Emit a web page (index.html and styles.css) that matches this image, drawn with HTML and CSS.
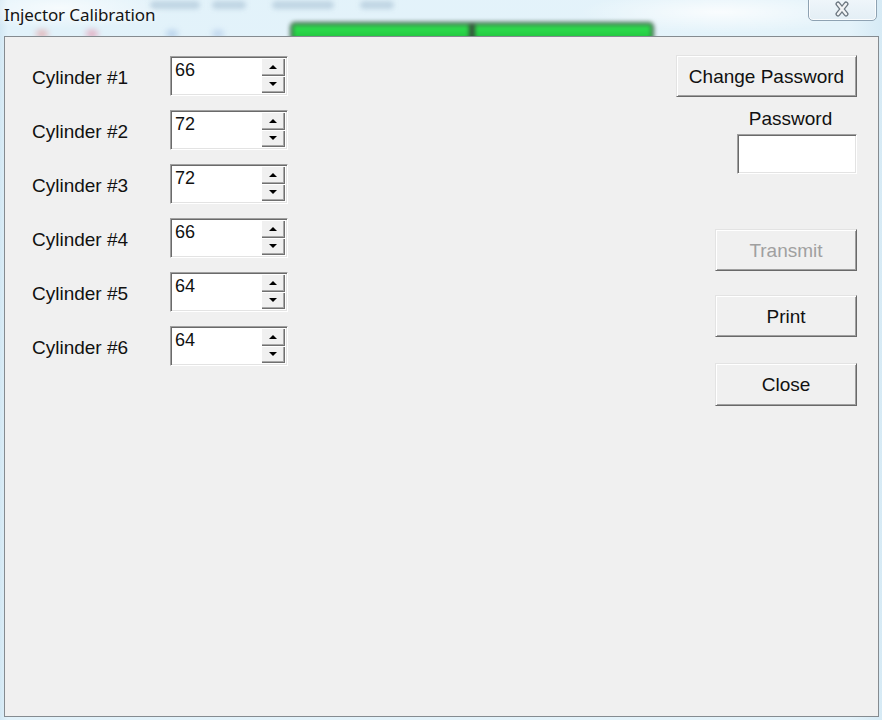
FILE: index.html
```html
<!DOCTYPE html>
<html>
<head>
<meta charset="utf-8">
<title>Injector Calibration</title>
<link rel="stylesheet" href="styles.css">
</head>
<body>
<div class="window">
  <div class="titlebar">
    <div class="backdrop">
      <span class="smudge s1"></span>
      <span class="smudge s2"></span>
      <span class="smudge s3"></span>
      <span class="smudge s4"></span>
      <span class="blob b1"></span>
      <span class="blob b2"></span>
      <span class="blob b3"></span>
      <span class="blob b4"></span>
      <div class="green-bar"><span class="green-seg"></span><span class="green-div"></span><span class="green-seg"></span></div>
    </div>
    <div class="title">Injector Calibration</div>
    <div class="close-btn">
      <svg width="16" height="16" viewBox="0 0 16 16">
        <path d="M4 3 L12 13 M12 3 L4 13" stroke="#6c7781" stroke-width="5" stroke-linecap="round" fill="none"/>
        <path d="M4 3 L12 13 M12 3 L4 13" stroke="#f2f4f6" stroke-width="2.4" stroke-linecap="round" fill="none"/>
      </svg>
    </div>
  </div>
  <div class="client">
    <div class="fields">
      <div class="row"><span class="label">Cylinder #1</span><div class="spin"><span class="value">66</span><div class="spin-btns"><span class="spin-btn"><i class="up"></i></span><span class="spin-btn"><i class="down"></i></span></div></div></div>
      <div class="row"><span class="label">Cylinder #2</span><div class="spin"><span class="value">72</span><div class="spin-btns"><span class="spin-btn"><i class="up"></i></span><span class="spin-btn"><i class="down"></i></span></div></div></div>
      <div class="row"><span class="label">Cylinder #3</span><div class="spin"><span class="value">72</span><div class="spin-btns"><span class="spin-btn"><i class="up"></i></span><span class="spin-btn"><i class="down"></i></span></div></div></div>
      <div class="row"><span class="label">Cylinder #4</span><div class="spin"><span class="value">66</span><div class="spin-btns"><span class="spin-btn"><i class="up"></i></span><span class="spin-btn"><i class="down"></i></span></div></div></div>
      <div class="row"><span class="label">Cylinder #5</span><div class="spin"><span class="value">64</span><div class="spin-btns"><span class="spin-btn"><i class="up"></i></span><span class="spin-btn"><i class="down"></i></span></div></div></div>
      <div class="row"><span class="label">Cylinder #6</span><div class="spin"><span class="value">64</span><div class="spin-btns"><span class="spin-btn"><i class="up"></i></span><span class="spin-btn"><i class="down"></i></span></div></div></div>
    </div>
    <div class="actions">
      <div class="btn btn-wide">Change Password</div>
      <div class="pw-group">
        <span class="pw-label">Password</span>
        <div class="pw-input"></div>
      </div>
      <div class="btn btn-std btn-transmit disabled">Transmit</div>
      <div class="btn btn-std btn-print">Print</div>
      <div class="btn btn-std btn-close">Close</div>
    </div>
  </div>
</div>
</body>
</html>
```

FILE: styles.css
```css
html, body {
  margin: 0;
  padding: 0;
  width: 882px;
  height: 720px;
  overflow: hidden;
}

.window {
  width: 882px;
  height: 720px;
  display: flex;
  flex-direction: column;
  position: relative;
  overflow: hidden;
  background:
    radial-gradient(ellipse 160px 30px at 60px 8px, rgba(255,255,255,0.7), rgba(255,255,255,0) 70%),
    radial-gradient(ellipse 200px 30px at 720px 12px, rgba(255,255,255,0.8), rgba(255,255,255,0) 70%),
    linear-gradient(90deg, #d3e8f4 0px, #e2f2fa 8px, #e4f3fa 850px, #d6eaf5 882px);
}

/* ---------- title bar ---------- */
.titlebar {
  height: 36px;
  flex: none;
  display: flex;
  justify-content: space-between;
  align-items: flex-start;
  position: relative;
}

.backdrop {
  position: absolute;
  left: 0;
  top: 0;
  width: 882px;
  height: 36px;
  overflow: hidden;
}

/* blurred menu words seen through the glass */
.smudge {
  position: absolute;
  top: 1px;
  height: 8px;
  border-radius: 4px;
  background: #b6cddd;
  filter: blur(2.5px);
  opacity: 0.8;
}
.s1 { left: 150px; width: 50px; }
.s2 { left: 212px; width: 34px; }
.s3 { left: 272px; width: 62px; }
.s4 { left: 360px; width: 34px; }

.blob {
  position: absolute;
  top: 30px;
  width: 12px;
  height: 8px;
  border-radius: 50%;
  filter: blur(3px);
  opacity: 0.55;
}
.b1 { left: 36px; background: #e07a7a; }
.b2 { left: 86px; background: #e26a8a; }
.b3 { left: 166px; background: #8fb2dc; }
.b4 { left: 212px; background: #9cb9e0; }

.green-bar {
  position: absolute;
  left: 290px;
  top: 22px;
  width: 364px;
  height: 20px;
  box-sizing: border-box;
  border: 3px solid #3d6448;
  border-radius: 5px;
  display: flex;
  filter: blur(2px);
  background: #25cf45;
}
.green-seg {
  flex: 1;
  background: linear-gradient(#30e050, #22c83f);
}
.green-div {
  width: 6px;
  background: #35503c;
}

.title {
  position: relative;
  margin: 4px 0 0 4px;
  font-family: "Noto Sans", "DejaVu Sans", sans-serif;
  font-size: 17px;
  line-height: 22px;
  letter-spacing: -0.1px;
  color: #141414;
  text-shadow: 0 0 6px rgba(255,255,255,0.9);
}

.close-btn {
  position: relative;
  width: 69px;
  height: 26px;
  margin: -5px 5px 0 0;
  box-sizing: border-box;
  border: 1px solid #8ea2b2;
  border-radius: 0 0 5px 5px;
  background: linear-gradient(#f1f7fb, #e3eef5);
  box-shadow: inset 0 0 0 1px rgba(255,255,255,0.8);
  display: flex;
  align-items: flex-end;
  justify-content: center;
  padding-bottom: 3px;
}
.close-btn svg {
  display: block;
  margin-left: -2px;
}

/* ---------- client area ---------- */
.client {
  flex: 1;
  margin: 0 3px 3px 4px;
  border: 1px solid #858b90;
  background: #f0f0f0;
  display: flex;
  justify-content: space-between;
  position: relative;
  font-family: "Liberation Sans", Arial, sans-serif;
  font-size: 19px;
  color: #111;
}

.fields {
  padding: 19px 0 0 27px;
  display: flex;
  flex-direction: column;
  gap: 14px;
}

.row {
  display: flex;
  align-items: center;
  height: 40px;
}

.label {
  width: 138px;
  padding-top: 4px;
}

.spin {
  width: 118px;
  height: 40px;
  box-sizing: border-box;
  border: 1px solid;
  border-color: #a0a0a0 #ffffff #ffffff #a0a0a0;
  box-shadow: inset 1px 1px 0 #6a6a6a, inset -1px -1px 0 #e3e3e3;
  background: #fff;
  display: flex;
  padding: 1px 2px 2px 1px;
}

.value {
  flex: 1;
  padding: 2px 0 0 3px;
  font-size: 18px;
  line-height: 20px;
  color: #111;
}

.spin-btns {
  width: 24px;
  display: flex;
  flex-direction: column;
}

.spin-btn {
  flex: 1;
  background: #f0f0f0;
  box-shadow: inset 1px 1px 0 #ffffff, inset -1px -1px 0 #707070, inset -2px -2px 0 #a8a8a8;
  display: flex;
  align-items: center;
  justify-content: center;
}

.up, .down {
  width: 0;
  height: 0;
  border-left: 4px solid transparent;
  border-right: 4px solid transparent;
}
.up { border-bottom: 4px solid #000; }
.down { border-top: 4px solid #000; }

/* ---------- right column ---------- */
.actions {
  padding: 18px 21px 0 0;
  display: flex;
  flex-direction: column;
  align-items: flex-end;
}

.btn {
  box-sizing: border-box;
  height: 42px;
  background: #f0f0f0;
  border: 1px solid;
  border-color: #e3e3e3 #696969 #696969 #e3e3e3;
  box-shadow: inset 1px 1px 0 #ffffff, inset -1px -1px 0 #a0a0a0;
  display: flex;
  align-items: center;
  justify-content: center;
  color: #111;
  padding-top: 1px;
}

.btn-wide { width: 181px; }
.btn-std { width: 142px; }

.pw-group {
  width: 120px;
  margin-top: 11px;
  display: flex;
  flex-direction: column;
  align-items: center;
}

.pw-label {
  line-height: 22px;
  padding-right: 13px;
}

.pw-input {
  margin-top: 4px;
  width: 120px;
  height: 40px;
  box-sizing: border-box;
  border: 1px solid;
  border-color: #a0a0a0 #ffffff #ffffff #a0a0a0;
  box-shadow: inset 1px 1px 0 #6a6a6a, inset -1px -1px 0 #e3e3e3;
  background: #fff;
}

.btn-transmit { margin-top: 55px; }
.btn-print { margin-top: 24px; }
.btn-close { margin-top: 26px; height: 43px; }

.disabled { color: #a0a0a0; }
```
